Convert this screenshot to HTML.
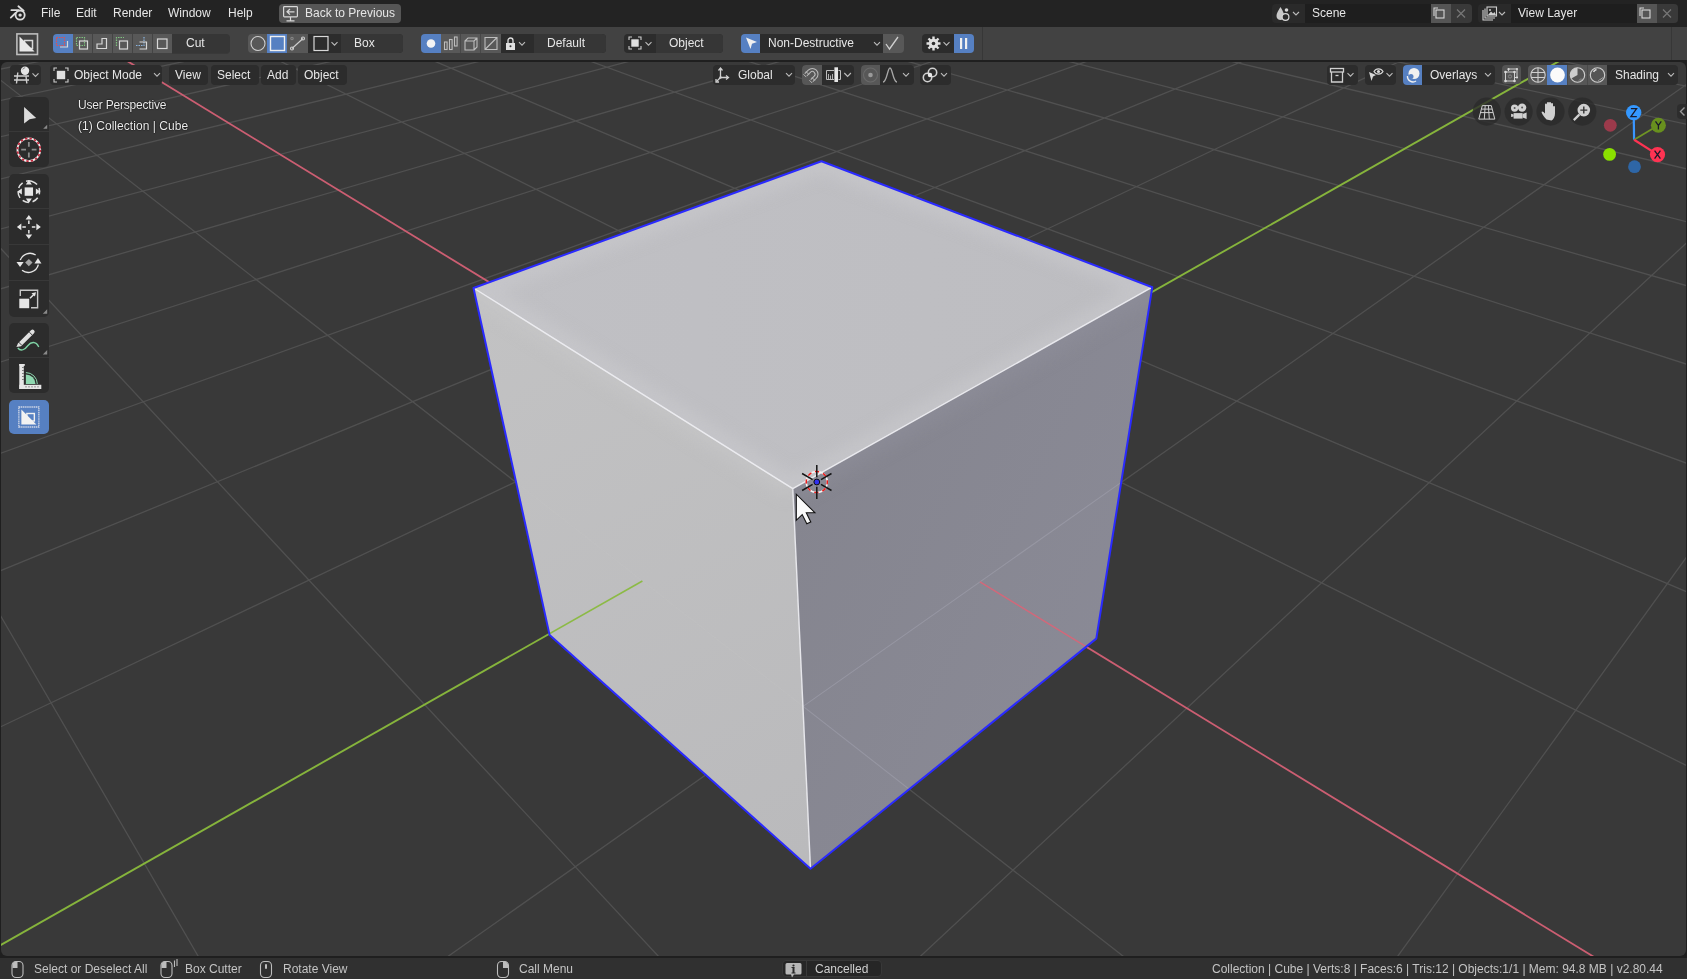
<!DOCTYPE html>
<html><head><meta charset="utf-8">
<style>
html,body{margin:0;padding:0;width:1687px;height:979px;overflow:hidden;background:#1f1f1f;}
*{box-sizing:border-box;}
body{font-family:"Liberation Sans",sans-serif;font-size:12px;color:#e6e6e6;position:relative;}
.a{position:absolute;}
.t{position:absolute;white-space:pre;line-height:14px;will-change:transform;}
#topbar{left:0;top:0;width:1687px;height:27px;background:#232323;}
#tool{left:0;top:27px;width:1687px;height:33px;background:#424242;}
#status{left:0;top:958px;width:1687px;height:21px;background:#303030;}
.btn{position:absolute;height:20px;border-radius:4px;}
.blue{background:#5680c2;}
.gray{background:#585858;}
.dark{background:#2c2c2c;}
.hb{position:absolute;height:20px;background:#2c2c2c;border-radius:4px;}
.tb{position:absolute;left:9px;width:40px;background:#2c2c2c;border-radius:5px;}
svg.ic{position:absolute;overflow:visible;}
</style></head><body>
<svg width="1687" height="979" viewBox="0 0 1687 979" style="position:absolute;left:0;top:0">
<defs><clipPath id="vp"><rect x="1" y="62" width="1685" height="894" rx="6" ry="6"/></clipPath>
<linearGradient id="gTop" x1="473" y1="289" x2="1152" y2="287" gradientUnits="userSpaceOnUse"><stop offset="0" stop-color="#c0c0c4"/><stop offset="1" stop-color="#bdbdc1"/></linearGradient>
<linearGradient id="gLeft" x1="500" y1="300" x2="800" y2="860" gradientUnits="userSpaceOnUse"><stop offset="0" stop-color="#c2c2c3"/><stop offset="1" stop-color="#bababc"/></linearGradient>
<linearGradient id="gRight" x1="800" y1="480" x2="1150" y2="640" gradientUnits="userSpaceOnUse"><stop offset="0" stop-color="#85858f"/><stop offset="1" stop-color="#8a8a96"/></linearGradient>
</defs>
<g clip-path="url(#vp)">
<rect x="0" y="0" width="1687" height="979" fill="#393939"/>
<path d="M46.1,60.0L0.0,69.2 M190.9,60.0L0.0,100.6 M337.1,60.0L0.0,136.9 M484.8,60.0L0.0,179.2 M634.0,60.0L0.0,229.1 M784.6,60.0L0.0,289.0 M936.8,60.0L0.0,362.2 M1090.5,60.0L0.0,453.5 M0.0,614.8L199.2,958.0 M1245.8,60.0L0.0,570.9 M0.0,247.7L660.0,958.0 M1402.6,60.0L0.0,727.1 M0.0,79.7L1125.5,958.0 M1687.0,84.1L445.7,958.0 M277.8,60.0L1687.0,765.8 M1687.0,242.5L918.6,958.0 M431.7,60.0L1687.0,591.9 M1687.0,556.6L1396.4,958.0 M587.1,60.0L1687.0,463.3 M744.2,60.0L1687.0,364.3 M903.0,60.0L1687.0,285.8 M1063.4,60.0L1687.0,221.9 M1225.6,60.0L1687.0,169.0 M1389.5,60.0L1687.0,124.4 M1555.1,60.0L1687.0,86.3" stroke="#505050" stroke-width="1.3" fill="none"/>
<path d="M125.5,60.0L1595.7,958.0" stroke="#cc5e72" stroke-width="1.8" fill="none"/>
<path d="M1561.1,60.0L0.0,945.4" stroke="#86b43c" stroke-width="1.9" fill="none"/>
<polygon points="821.4,161.2 1152.3,287.2 792.8,488.7 473.5,288.0" fill="url(#gTop)"/>
<polygon points="473.5,288.0 792.8,488.7 810.5,868.7 549.6,635.1" fill="url(#gLeft)"/>
<polygon points="792.8,488.7 1152.3,287.2 1096.3,638.6 810.5,868.7" fill="url(#gRight)"/>
<filter id="blur6" x="-20%" y="-20%" width="140%" height="140%"><feGaussianBlur stdDeviation="8"/></filter>
<clipPath id="cTop"><polygon points="821.4,161.2 1152.3,287.2 792.8,488.7 473.5,288.0"/></clipPath>
<clipPath id="cLeft"><polygon points="473.5,288.0 792.8,488.7 810.5,868.7 549.6,635.1"/></clipPath>
<clipPath id="cRight"><polygon points="792.8,488.7 1152.3,287.2 1096.3,638.6 810.5,868.7"/></clipPath>
<g clip-path="url(#cTop)"><polygon points="821.4,161.2 1152.3,287.2 792.8,488.7 473.5,288.0" fill="none" stroke="#cbcbcf" stroke-width="22" filter="url(#blur6)" opacity="0.55"/></g>
<g clip-path="url(#cLeft)"><path d="M473.5,288.0L792.8,488.7" fill="none" stroke="#c9c9ca" stroke-width="20" filter="url(#blur6)" opacity="0.5"/></g>
<g clip-path="url(#cRight)"><path d="M792.8,488.7L1152.3,287.2" fill="none" stroke="#92929e" stroke-width="20" filter="url(#blur6)" opacity="0.5"/></g>
<clipPath id="sil"><polygon points="821.4,161.2 1152.3,287.2 1096.3,638.6 810.5,868.7 549.6,635.1 473.5,288.0"/></clipPath>
<g clip-path="url(#sil)">
<path d="M803.1,706.4L1121.2,482.4" stroke="#9a9aa6" stroke-width="1.1" fill="none" opacity="0.8"/>
<path d="M515.5,481.9L803.1,706.4" stroke="#c8c8ca" stroke-width="1.1" fill="none" opacity="0.2"/>
<path d="M803.1,706.4L1298.6,1093.1" stroke="#9a9aa6" stroke-width="1.1" fill="none" opacity="0.8"/>
<path d="M980.0,581.9L1457.5,873.6" stroke="#d2687a" stroke-width="1.5" fill="none"/>
<path d="M642.4,581.0L144.4,863.5" stroke="#8cba45" stroke-width="1.6" fill="none"/>
</g>
<path d="M473.5,288.0L792.8,488.7L1152.3,287.2 M792.8,488.7L810.5,868.7" stroke="#f2f2f6" stroke-width="1.4" fill="none" opacity="0.9"/>
<polygon points="821.4,161.2 1152.3,287.2 1096.3,638.6 810.5,868.7 549.6,635.1 473.5,288.0" fill="none" stroke="#2a2aff" stroke-width="2.0" stroke-linejoin="round"/>
</g>
</svg>
<div id="vhead" class="a" style="left:0;top:0">
<div class="hb" style="left:10px;top:65px;width:31px"></div>
<svg class="ic" style="left:0;top:60px" width="45" height="30" viewBox="0 60 45 30">
<g stroke="#cfcfcf" stroke-width="1.4" fill="none"><path d="M14 76 H29 M14 80 H29 M17.8 72.5 L16.5 83.5 M26 76 L26.8 83.5"/></g>
<circle cx="25" cy="70.8" r="4.2" fill="#e6e6e6"/><path d="M22.8 69.5 A2.4 2.4 0 0 1 25.2 67.8" stroke="#777" stroke-width="0.9" fill="none"/>
<path d="M32.5 73.3 L35.5 76.3 L38.5 73.3" stroke="#bbb" stroke-width="1.2" fill="none"/>
</svg>
<div class="hb" style="left:50px;top:65px;width:112px"></div>
<svg class="ic" style="left:50px;top:65px" width="112" height="20" viewBox="0 0 112 20">
<g fill="none" stroke="#cfcfcf" stroke-width="1.1"><path d="M4 6 V3 H7 M15 3 H18 V6 M18 14 V17 H15 M7 17 H4 V14"/></g>
<rect x="6.8" y="5.8" width="8.4" height="8.4" fill="#e0e0e0"/>
<path d="M104 8.2 L107 11.2 L110 8.2" stroke="#bbb" stroke-width="1.1" fill="none"/>
</svg>
<span class="t" style="left:74px;top:68px">Object Mode</span>
<div class="hb" style="left:169px;top:65px;width:39px"></div><span class="t" style="left:175px;top:68px">View</span>
<div class="hb" style="left:211px;top:65px;width:48px"></div><span class="t" style="left:217px;top:68px">Select</span>
<div class="hb" style="left:261px;top:65px;width:35px"></div><span class="t" style="left:267px;top:68px">Add</span>
<div class="hb" style="left:298px;top:65px;width:49px"></div><span class="t" style="left:304px;top:68px">Object</span>

<div class="hb" style="left:713px;top:65px;width:82px"></div>
<svg class="ic" style="left:713px;top:65px" width="82" height="20" viewBox="0 0 82 20">
<g stroke="#d0d0d0" stroke-width="1.3" fill="none"><path d="M7.5 3.5 V12.5 L15 12.5 M7.5 12.5 L3.5 16.5"/><path d="M5.5 5.5 L7.5 3 L9.5 5.5 M13 10.5 L15.5 12.5 L13 14.5 M3 14 V17 H6"/></g>
<circle cx="7.5" cy="12.5" r="1.2" fill="#d0d0d0"/>
<path d="M73 8.2 L76 11.2 L79 8.2" stroke="#bbb" stroke-width="1.1" fill="none"/>
</svg>
<span class="t" style="left:738px;top:68px">Global</span>
<div class="hb" style="left:802px;top:65px;width:52px"></div>
<div class="a" style="left:802px;top:65px;width:20px;height:20px;background:#575757;border-radius:4px 0 0 4px"></div>
<svg class="ic" style="left:795px;top:60px" width="65" height="30" viewBox="795 60 65 30">
<g transform="translate(812.3 74.2) rotate(45)">
<path d="M-4.2 5 V0 A4.2 4.2 0 0 1 4.2 0 V5" stroke="#bdbdbd" stroke-width="4" fill="none"/>
<path d="M-4.2 5.6 V0 A4.2 4.2 0 0 1 4.2 0 V5.6" stroke="#585858" stroke-width="2" fill="none"/>
<path d="M-6.2 2.6 H-2.2 M2.2 2.6 H6.2" stroke="#bdbdbd" stroke-width="0.9"/>
<path d="M-6.2 6.3 H-2.2 M2.2 6.3 H6.2" stroke="#bdbdbd" stroke-width="0.9"/>
</g>
<path d="M834 70.5 H826.5 V79.5 H834 M838.5 70.5 H840.5 V79.5 H838.5" stroke="#bdbdbd" stroke-width="1" fill="none"/>
<path d="M828.5 79 V74 M830.5 79 V75.5 M832.5 79 V74" stroke="#bdbdbd" stroke-width="0.9"/>
<rect x="834.4" y="67.3" width="3.6" height="14.7" fill="#e6e6e6"/>
<path d="M844.3 73 L847.6 76.3 L850.9 73" stroke="#bbb" stroke-width="1.2" fill="none"/>
</svg>
<div class="hb" style="left:861px;top:65px;width:53px"></div>
<div class="a" style="left:861px;top:65px;width:19px;height:20px;background:#575757;border-radius:4px 0 0 4px"></div>
<svg class="ic" style="left:861px;top:65px" width="53" height="20" viewBox="0 0 53 20">
<circle cx="9.5" cy="10" r="7" fill="none" stroke="#6a6a6a" stroke-width="1.1"/><circle cx="9.5" cy="10" r="2.3" fill="#9a9a9a"/>
<path d="M22 17 C26 17 26.5 3 29 3 C31.5 3 32 17 36 17" stroke="#a8a8a8" stroke-width="1.3" fill="none"/>
<path d="M42 8.2 L45 11.2 L48 8.2" stroke="#bbb" stroke-width="1.1" fill="none"/>
</svg>
<div class="hb" style="left:920px;top:65px;width:31px"></div>
<svg class="ic" style="left:920px;top:65px" width="31" height="20" viewBox="0 0 31 20">
<g stroke="#d0d0d0" stroke-width="1.6" fill="none"><circle cx="7.5" cy="12.5" r="4.2"/><circle cx="12.5" cy="7.5" r="4.2"/></g><circle cx="10" cy="10" r="2.2" fill="#e8e8e8"/>
<path d="M21 8.2 L24 11.2 L27 8.2" stroke="#bbb" stroke-width="1.1" fill="none"/>
</svg>

<div class="hb" style="left:1327px;top:65px;width:31px"></div>
<svg class="ic" style="left:1327px;top:65px" width="31" height="20" viewBox="0 0 31 20">
<g stroke="#d0d0d0" stroke-width="1.3" fill="none"><rect x="3.5" y="3.5" width="13" height="3.5"/><path d="M4.5 7 V17 H15.5 V7"/><path d="M8.5 10.5 H11.5"/></g>
<path d="M20.5 8.2 L23.5 11.2 L26.5 8.2" stroke="#bbb" stroke-width="1.1" fill="none"/>
</svg>
<div class="hb" style="left:1365px;top:65px;width:31px"></div>
<svg class="ic" style="left:1365px;top:65px" width="31" height="20" viewBox="0 0 31 20">
<path d="M4 7 L11 10 L8 11.5 L6.5 16 Z" fill="#d8d8d8"/>
<path d="M9 6.5 C11 3 16 3 18 6.5 C16 10 11 10 9 6.5Z" fill="none" stroke="#d8d8d8" stroke-width="1.2"/><circle cx="13.5" cy="6.5" r="1.6" fill="#d8d8d8"/>
<path d="M21.5 8.2 L24.5 11.2 L27.5 8.2" stroke="#bbb" stroke-width="1.1" fill="none"/>
</svg>
<div class="hb" style="left:1403px;top:65px;width:92px"></div>
<div class="a" style="left:1403px;top:65px;width:19px;height:20px;background:#5680c2;border-radius:4px 0 0 4px"></div>
<svg class="ic" style="left:1403px;top:65px" width="92" height="20" viewBox="0 0 92 20">
<circle cx="11" cy="8.5" r="5.5" fill="#f0f0f0"/><path d="M4.5 11 A5.5 5.5 0 0 0 13 16" stroke="#f0f0f0" stroke-width="1.4" fill="none"/><circle cx="8" cy="11.5" r="2.5" fill="#5680c2"/>
<path d="M82 8.2 L85 11.2 L88 8.2" stroke="#bbb" stroke-width="1.1" fill="none"/>
</svg>
<span class="t" style="left:1430px;top:68px">Overlays</span>
<div class="a" style="left:1502px;top:65px;width:19px;height:19px;background:#545454;border-radius:4px"></div>
<svg class="ic" style="left:1502px;top:65px" width="19" height="20" viewBox="0 0 19 20">
<g stroke="#d0d0d0" stroke-width="1" fill="none"><path d="M6.5 6 V4 H15 V12.5 H13"/><rect x="3.5" y="7" width="9" height="9"/><circle cx="8" cy="11.5" r="1.6" stroke="#888"/></g>
<g fill="#d8d8d8"><circle cx="3.5" cy="7" r="1.3"/><circle cx="12.5" cy="7" r="1.3"/><circle cx="3.5" cy="16" r="1.3"/><circle cx="12.5" cy="16" r="1.3"/><circle cx="6.5" cy="4.2" r="1.1"/><circle cx="15" cy="4" r="1.1"/><circle cx="15" cy="12.5" r="1.1"/></g>
</svg>
<div class="hb" style="left:1528px;top:65px;width:150px"></div>
<div class="a" style="left:1528px;top:65px;width:79px;height:20px;background:#575757;border-radius:4px 0 0 4px"></div>
<div class="a" style="left:1547px;top:65px;width:20px;height:20px;background:#5680c2"></div>
<div class="a" style="left:1567px;top:65px;width:1px;height:20px;background:#4a4a4a"></div>
<div class="a" style="left:1587px;top:65px;width:1px;height:20px;background:#4a4a4a"></div>
<svg class="ic" style="left:1528px;top:65px" width="150" height="20" viewBox="0 0 150 20">
<g stroke="#cfcfcf" stroke-width="1.1" fill="none"><circle cx="10" cy="10" r="7.2"/><path d="M10 2.8 V17.2 M3 7.5 H17 M3 12.5 H17"/></g>
<circle cx="29.5" cy="10" r="7.4" fill="#fafafa"/>
<circle cx="49.5" cy="10" r="7.2" fill="#555" stroke="#d0d0d0" stroke-width="1.1"/><path d="M49.5 10 V2.8 A7.2 7.2 0 0 0 43.3 13.6 Z" fill="#cdcdcd"/><path d="M51 15.5 L53 13.5 M52.5 16 L54.5 14 M54 15 L55.5 13.2" stroke="#aaa" stroke-width="0.7"/>
<circle cx="69.5" cy="10" r="7.2" fill="#555" stroke="#d0d0d0" stroke-width="1.1"/><path d="M65.5 6.8 A5 5 0 0 1 68.5 4.6" stroke="#d8d8d8" stroke-width="1.6" fill="none"/><path d="M72 15 L74 13 M70 16 L72.5 13.8 M73.8 13.8 L75.2 12" stroke="#aaa" stroke-width="0.7"/>
<path d="M140 8.2 L143 11.2 L146 8.2" stroke="#bbb" stroke-width="1.1" fill="none"/>
</svg>
<span class="t" style="left:1615px;top:68px">Shading</span>
</div>

<div id="gizmo" class="a" style="left:0;top:0">
<svg class="ic" style="left:1460px;top:90px" width="227" height="90" viewBox="1460 90 227 90">
<g fill="#2a2a2a" fill-opacity="0.78"><circle cx="1486.8" cy="111.6" r="14.1"/><circle cx="1518.6" cy="111.6" r="14.1"/><circle cx="1550.5" cy="111.6" r="14.1"/><circle cx="1582.3" cy="111.6" r="14.1"/></g>
<g transform="translate(1486.8 111.6)" stroke="#cfcfcf" stroke-width="1" fill="none"><path d="M-4.5 -6 H4.5 L8 7.5 H-8 Z M-6.2 1 H6.2 M-5.3 -2.5 H5.3 M-1.6 -6 L-2.5 7.5 M1.6 -6 L2.5 7.5"/></g>
<g transform="translate(1518.6 111.6)" fill="#d0d0d0"><circle cx="-4" cy="-3.5" r="3.6"/><circle cx="3.5" cy="-4" r="4.2"/><rect x="-5" y="1.5" width="9" height="5.5"/><path d="M4 2.5 L8 0.8 V7.5 L4 5.8Z M-5 3 L-7.5 2.2 V5.5 L-5 4.8Z"/><circle cx="-4" cy="-3.5" r="1" fill="#555"/><circle cx="3.5" cy="-4" r="1" fill="#555"/></g>
<g transform="translate(1550.5 111.6)" fill="#d0d0d0"><path d="M-4 8 C-7 5 -8.5 2 -9 0.5 C-8.5 -0.5 -7 0 -5.5 2 V-7 A1 1 0 0 1 -3.5 -7 V-1 V-8.5 A1 1 0 0 1 -1.5 -8.5 V-1 V-8.5 A1 1 0 0 1 0.5 -8.5 V-1 V-7.5 A1 1 0 0 1 2.5 -7.5 V-0.5 V-4.5 A1 1 0 0 1 4.5 -4.5 V2 C4.5 5 3 8 1 9 Z"/></g>
<g transform="translate(1582.3 111.6)"><circle cx="1.5" cy="-1.5" r="6.3" fill="#d0d0d0"/><path d="M-3 3 L-8.5 8.5" stroke="#d0d0d0" stroke-width="2.2"/><path d="M1.5 -5 V2 M-2 -1.5 H5" stroke="#333" stroke-width="1.4"/></g>
<path d="M1634.1 139.8 L1633.7 112.6" stroke="#3a96ff" stroke-width="2.2"/>
<path d="M1634.1 139.8 L1658.4 125.3" stroke="#6f9424" stroke-width="1.8"/>
<path d="M1634.1 139.8 L1657.5 154.6" stroke="#ff3352" stroke-width="2.2"/>
<circle cx="1610.3" cy="125.3" r="6.4" fill="#9c3a4b"/>
<circle cx="1609.6" cy="154.4" r="6.4" fill="#8ae000"/>
<circle cx="1634.5" cy="166.7" r="6.4" fill="#2e66a6"/>
<circle cx="1633.7" cy="112.6" r="7.7" fill="#3498ff"/>
<circle cx="1658.4" cy="125.3" r="7.5" fill="#68901e"/>
<circle cx="1657.5" cy="154.6" r="7.6" fill="#ff3352"/>
<g fill="none" stroke="#1a1a2a" stroke-width="1.3"><path d="M1630.9 108.6 H1636.6 L1630.9 116.6 H1636.8"/><path d="M1655.5 121.4 L1658.4 125.3 L1661.3 121.4 M1658.4 125.3 V129.4"/><path d="M1654.6 150.6 L1660.4 158.6 M1660.4 150.6 L1654.6 158.6"/></g>
<rect x="1677" y="104" width="14" height="15" rx="4" fill="#2a2a2a" fill-opacity="0.8"/>
<path d="M1684.5 107.5 L1680.5 111.5 L1684.5 115.5" stroke="#9a9a9a" stroke-width="1.4" fill="none"/>
</svg>
<svg class="ic" style="left:790px;top:460px" width="50" height="70" viewBox="790 460 50 70">
<circle cx="816.8" cy="482.0" r="10.6" fill="none" stroke="#f6f6f6" stroke-width="1.5"/>
<circle cx="816.8" cy="482.0" r="10.6" fill="none" stroke="#ee1a1a" stroke-width="1.5" stroke-dasharray="4.16 4.16" transform="rotate(-100 816.8 482.0)"/>
<path d="M816.8 477.2 L816.8 465.0 M816.8 486.8 L816.8 499.0 M821.0 479.6 L831.5 473.5 M812.6 479.6 L802.1 473.5 M812.6 484.4 L802.1 490.5 M821.0 484.4 L831.5 490.5" stroke="#151515" stroke-width="1.5"/>
<circle cx="816.8" cy="482.0" r="2.9" fill="#3030f0" stroke="#101010" stroke-width="1"/>
<path d="M796.3 494.2 V520.3 L802.2 514.6 L806.8 523.8 L810.8 521.9 L806.3 512.7 L814.9 512.7 Z" fill="#fafafa" stroke="#111" stroke-width="1.1" stroke-linejoin="miter"/>
</svg>
</div>
<div id="vtools" class="a" style="left:0;top:0">
<div class="tb" style="top:97px;height:70px"></div>
<div class="a" style="left:9px;top:131px;width:40px;height:1px;background:#383838"></div>
<div class="tb" style="top:174px;height:143px"></div>
<div class="tb" style="top:323px;height:70px"></div>
<div class="tb" style="top:400px;height:34px;background:#5680c2"></div>
<svg class="ic" style="left:0;top:90px" width="60" height="350" viewBox="0 90 60 350">
<path d="M24.1 107 L36.2 118 L29.6 119.2 L24.1 123.6 Z" fill="#dcdcdc"/><path d="M47.2 124.7 V128.7 H43.2 Z" fill="#8a8a8a"/>
<circle cx="28.85" cy="149.7" r="11.4" fill="none" stroke="#f2f2f2" stroke-width="1.8"/><circle cx="28.85" cy="149.7" r="11.4" fill="none" stroke="#c0283c" stroke-width="1.8" stroke-dasharray="2.4 2.1"/>
<path d="M28.85 142 V146.8 M28.85 152.6 V157.4 M21.2 149.7 H26 M31.7 149.7 H36.5" stroke="#8c8c8c" stroke-width="1.8"/>
<g transform="translate(28.85 191.6)"><circle r="10.8" fill="none" stroke="#e0e0e0" stroke-width="1.5" stroke-dasharray="6.5 3.8" transform="rotate(-75)"/><rect x="-4.2" y="-4.2" width="8.4" height="8.4" fill="#e6e6e6"/><path d="M0 -11.5 L-3 -7 H3Z M0 11.5 L-3 7 H3Z M-11.5 0 L-7 -3 V3Z M11.5 0 L7 -3 V3Z" fill="#e6e6e6"/></g>
<g transform="translate(28.85 226.9)" fill="#e6e6e6"><path d="M0 -12 L-3.3 -7.5 H3.3Z M0 12 L-3.3 7.5 H3.3Z M-12 0 L-7.5 -3.3 V3.3Z M12 0 L7.5 -3.3 V3.3Z"/><path d="M0 -6.5 V-3 M0 3 V6.5 M-6.5 0 H-3 M3 0 H6.5" stroke="#e6e6e6" stroke-width="1.5"/></g>
<g transform="translate(28.85 262.6)"><path d="M-8.6 -2.5 A10.3 10.3 0 0 1 6.8 -7.6" stroke="#e6e6e6" stroke-width="1.4" fill="none"/><path d="M-6.8 7.6 A10.3 10.3 0 0 0 9.5 2" stroke="#e6e6e6" stroke-width="1.4" fill="none"/><path d="M-3.7 0 L0 -3.7 L3.7 0 L0 3.7Z" fill="#a6a6a6"/><path d="M-12.4 -0.6 H-5.2 L-8.8 4.5Z M12.6 0.8 H5.6 L9.1 -4.5Z" fill="#e6e6e6"/></g>
<g><path d="M20.3 296 V290.3 H37.6 V307.8 H31" stroke="#c8c8c8" stroke-width="1.4" fill="none"/><rect x="19.3" y="298.7" width="9.9" height="9.5" fill="#e6e6e6"/><path d="M30 298.3 L34.6 293.7" stroke="#e6e6e6" stroke-width="1.5"/><path d="M36 292.2 L31.5 293.2 L34.9 296.6Z" fill="#e6e6e6"/><path d="M47.2 309.3 V313.8 H42.8 Z" fill="#8a8a8a"/></g>
<g><path d="M16.4 347 L18 343.2 L31 330.2 A2 2 0 0 1 34 333.2 L21 346.2 Z" fill="#e0e0e0"/><path d="M18 341.5 L21.8 345.3 M29.2 332 L32.6 335.4" stroke="#2c2c2c" stroke-width="0.9"/><path d="M17.8 348 C21 352 25 349.5 28 345.5 C31 341.5 36 341 38.8 347" stroke="#7fd3a5" stroke-width="1.3" fill="none"/><path d="M47.2 350 V354.5 H42.8 Z" fill="#8a8a8a"/></g>
<g><path d="M25.9 384 V374.4 A9.6 9.6 0 0 1 35.5 384 Z" fill="#8fd8b0"/><path d="M25.9 372.6 A11.4 11.4 0 0 1 37.3 384" stroke="#8fd8b0" stroke-width="1" fill="none"/><rect x="19.3" y="364" width="4.5" height="25" fill="#e6e6e6"/><rect x="19.3" y="384.8" width="22" height="4.2" fill="#e6e6e6"/><rect x="19.3" y="364" width="5.5" height="1.8" fill="#e6e6e6"/><path d="M22 367.5 H23.8 M22 370.5 H23.8 M22 373.5 H23.8 M22 376.5 H23.8 M22 379.5 H23.8 M26 386 V387.5 M29 386 V387.5 M32 386 V387.5 M35 386 V387.5 M38 386 V387.5" stroke="#555" stroke-width="0.7"/></g>
<g transform="translate(28.85 417)"><rect x="-10" y="-10" width="20" height="20" fill="none" stroke="#d0d6e6" stroke-width="1.3" stroke-dasharray="1.3 0.6"/><rect x="-2" y="-3.5" width="7.5" height="7.5" fill="none" stroke="#f0f0f0" stroke-width="1.4"/><path d="M-7.5 -7.5 L7.5 7.5 H-7.5Z" fill="#f2f2f2"/></g>
</svg>
<div class="a" style="left:9px;top:208px;width:40px;height:1px;background:#383838"></div>
<div class="a" style="left:9px;top:244px;width:40px;height:1px;background:#383838"></div>
<div class="a" style="left:9px;top:280px;width:40px;height:1px;background:#383838"></div>
<div class="a" style="left:9px;top:357px;width:40px;height:1px;background:#383838"></div>
<span class="t" style="left:78px;top:98px;color:#ececec;text-shadow:0 0 1.5px #000,0 0 1px #000;letter-spacing:-0.2px">User Perspective</span>
<span class="t" style="left:78px;top:119px;color:#ececec;text-shadow:0 0 1.5px #000,0 0 1px #000;letter-spacing:0.05px">(1) Collection | Cube</span>
</div>

<div id="topbar" class="a">
<svg class="ic" style="left:0;top:0" width="40" height="27" viewBox="0 0 40 27">
<g stroke="#dcdcdc" stroke-width="1.8" fill="none" stroke-linecap="round">
<circle cx="20.1" cy="15.1" r="4.6"/>
<path d="M11.4 10.2 L18.6 10.2"/><path d="M10.8 17.6 L15.6 13"/><path d="M18.4 6.3 L23.6 10.8"/>
</g><circle cx="20.1" cy="15.1" r="1.7" fill="#dcdcdc"/>
</svg>
<span class="t" style="left:41px;top:6px">File</span>
<span class="t" style="left:76px;top:6px">Edit</span>
<span class="t" style="left:113px;top:6px">Render</span>
<span class="t" style="left:168px;top:6px">Window</span>
<span class="t" style="left:228px;top:6px">Help</span>
<div class="a" style="left:279px;top:4px;width:122px;height:19px;background:#565656;border-radius:4px"></div>
<svg class="ic" style="left:282px;top:5px" width="18" height="18" viewBox="0 0 18 18">
<g stroke="#d8d8d8" stroke-width="1.2" fill="none"><rect x="1.6" y="1.6" width="13.8" height="10.3" rx="0.8"/><path d="M8.5 12 V15.5 M4.5 15.8 H12.5"/><path d="M12.5 6.8 H5 M8 4 L5 6.8 L8 9.6"/></g>
</svg>
<span class="t" style="left:305px;top:6px">Back to Previous</span>
<div class="a" style="left:1272px;top:4px;width:200px;height:19px;background:#2a2a2a;border-radius:4px"></div>
<div class="a" style="left:1305px;top:4px;width:126px;height:19px;background:#1e1e1e"></div>
<div class="a" style="left:1431px;top:4px;width:20px;height:19px;background:#555"></div>
<div class="a" style="left:1451px;top:4px;width:21px;height:19px;background:#393939;border-radius:0 4px 4px 0"></div>
<svg class="ic" style="left:1272px;top:4px" width="200" height="19" viewBox="0 0 200 19">
<path d="M8.5 3 C6 7 4.5 9.5 4.5 12 C4.5 14.5 6.5 16 8.5 16 C10.5 16 12 14.5 12 12 C12 9.5 11 7 8.5 3Z" fill="#c8c8c8"/>
<circle cx="14.5" cy="6" r="1.8" fill="#d8d8d8"/><circle cx="13.5" cy="13" r="3.4" fill="#2a2a2a" stroke="#d8d8d8" stroke-width="1.2"/>
<path d="M21 8 L24 11 L27 8" stroke="#bbb" stroke-width="1.1" fill="none"/>
<g fill="none" stroke="#d8d8d8" stroke-width="1.1"><rect x="164" y="6" width="8" height="8"/><path d="M166 4 H162 V12"/></g>
<path d="M185 5.5 L193 13.5 M193 5.5 L185 13.5" stroke="#777" stroke-width="1.2"/>
</svg>
<span class="t" style="left:1312px;top:6px">Scene</span>
<div class="a" style="left:1478px;top:4px;width:200px;height:19px;background:#2a2a2a;border-radius:4px"></div>
<div class="a" style="left:1511px;top:4px;width:126px;height:19px;background:#1e1e1e"></div>
<div class="a" style="left:1637px;top:4px;width:20px;height:19px;background:#555"></div>
<div class="a" style="left:1657px;top:4px;width:21px;height:19px;background:#393939;border-radius:0 4px 4px 0"></div>
<svg class="ic" style="left:1478px;top:4px" width="200" height="19" viewBox="0 0 200 19">
<g fill="none" stroke="#d0d0d0" stroke-width="1.1"><path d="M5 6 V16 H15"/><path d="M7 4.5 V14 H17"/><rect x="9" y="3" width="9.5" height="9"/></g>
<path d="M10 11 L13 7.5 L15 9.5 L16.5 8 L18 11Z" fill="#d0d0d0"/><circle cx="12" cy="6" r="1" fill="#d0d0d0"/>
<path d="M21 8 L24 11 L27 8" stroke="#bbb" stroke-width="1.1" fill="none"/>
<g fill="none" stroke="#d8d8d8" stroke-width="1.1"><rect x="164" y="6" width="8" height="8"/><path d="M166 4 H162 V12"/></g>
<path d="M185 5.5 L193 13.5 M193 5.5 L185 13.5" stroke="#777" stroke-width="1.2"/>
</svg>
<span class="t" style="left:1518px;top:6px">View Layer</span>
</div>
<div id="tool" class="a">
<svg class="ic" style="left:16px;top:6px" width="23" height="23" viewBox="0 0 23 23">
<rect x="0.9" y="0.9" width="20.6" height="20.6" fill="none" stroke="#bdbdbd" stroke-width="1.6"/>
<rect x="8.5" y="7.5" width="8" height="8" fill="none" stroke="#d9d9d9" stroke-width="1.5"/>
<path d="M3.5 3.5 L18.6 18.6 L3.5 18.6 Z" fill="#e8e8e8"/>
</svg>
<div class="btn blue" style="left:53px;top:7px;width:20px;height:19px;border-radius:4px 0 0 4px"></div>
<div class="btn gray" style="left:73px;top:7px;width:99px;height:19px;border-radius:0"></div>
<div class="a" style="left:92px;top:7px;width:1px;height:19px;background:#444"></div>
<div class="a" style="left:112px;top:7px;width:1px;height:19px;background:#444"></div>
<div class="a" style="left:132px;top:7px;width:1px;height:19px;background:#444"></div>
<div class="a" style="left:152px;top:7px;width:1px;height:19px;background:#444"></div>
<div class="btn" style="left:172px;top:7px;width:58px;height:19px;border-radius:0 4px 4px 0;background:#363636;box-shadow:0 1px 0 #393939"></div>
<svg class="ic" style="left:53px;top:7px" width="120" height="19" viewBox="0 0 120 19">
<g fill="none" stroke-width="1.2">
<rect x="3.5" y="3.5" width="8" height="8" stroke="#e05050" stroke-dasharray="1.5 1"/><path d="M7 13 H14.5 V7" stroke="#d8d8d8"/>
<rect x="23.5" y="3.5" width="8" height="8" stroke="#7fc27f" stroke-dasharray="1.5 1"/><rect x="26.5" y="7" width="8" height="8" stroke="#d8d8d8"/>
<path d="M44 14.5 H53.5 V4.5 H49 V10 H44 Z" stroke="#d8d8d8"/>
<path d="M63.5 12 V3.5 H71" stroke="#7fc27f" stroke-dasharray="1.5 1"/><rect x="66.5" y="7" width="8" height="8" stroke="#d8d8d8"/>
<path d="M83 11.5 H91 V3" stroke="#89b4e0" stroke-dasharray="1.5 1"/><path d="M86.5 8 H93.5 V15 H86.5" stroke="#d8d8d8"/>
<rect x="104.5" y="5" width="9.5" height="9.5" stroke="#d8d8d8"/>
</g></svg>
<span class="t" style="left:186px;top:9px">Cut</span>

<div class="btn gray" style="left:248px;top:7px;width:60px;height:19px;border-radius:4px 0 0 4px"></div>
<div class="btn blue" style="left:267px;top:7px;width:20px;height:19px;border-radius:0"></div>
<div class="btn dark" style="left:308px;top:7px;width:95px;height:19px;border-radius:0 4px 4px 0"></div>
<div class="btn" style="left:341px;top:7px;width:62px;height:19px;border-radius:0 4px 4px 0;background:#363636"></div>
<svg class="ic" style="left:248px;top:7px" width="100" height="19" viewBox="0 0 100 19">
<g fill="none" stroke="#cfcfcf" stroke-width="1.1">
<circle cx="10" cy="9.5" r="7"/>
<rect x="22.5" y="2.5" width="14" height="14" stroke="#f0f0f0" stroke-width="1.4" fill="#5680c2"/>
<path d="M44 14.5 L55 4.5"/><circle cx="44" cy="14.5" r="1.5"/><circle cx="55" cy="4.5" r="1.5"/><circle cx="44" cy="4.5" r="1.2" stroke="#888"/>
<rect x="66" y="2.5" width="14" height="14" stroke="#d8d8d8" stroke-width="1.2"/>
<path d="M83.5 8.2 L86.5 11.2 L89.5 8.2" stroke="#bbb" stroke-width="1.1"/>
</g></svg>
<span class="t" style="left:354px;top:9px">Box</span>

<div class="btn blue" style="left:421px;top:7px;width:20px;height:19px;border-radius:4px 0 0 4px"></div>
<div class="btn gray" style="left:441px;top:7px;width:60px;height:19px;border-radius:0"></div>
<div class="a" style="left:460px;top:7px;width:1px;height:19px;background:#484848"></div>
<div class="a" style="left:480px;top:7px;width:1px;height:19px;background:#484848"></div>
<div class="btn dark" style="left:501px;top:7px;width:105px;height:19px;border-radius:0 4px 4px 0"></div>
<div class="btn" style="left:534px;top:7px;width:72px;height:19px;border-radius:0 4px 4px 0;background:#363636"></div>
<svg class="ic" style="left:421px;top:7px" width="120" height="19" viewBox="0 0 120 19">
<circle cx="10" cy="9.5" r="4.3" fill="#f4f4f4"/>
<g fill="none" stroke="#bdbdbd" stroke-width="1.1">
<rect x="23.5" y="8" width="2.6" height="7.5"/><rect x="28.5" y="5.5" width="2.6" height="10"/><rect x="33.5" y="3" width="2.6" height="9"/>
<path d="M44 7 H53 V16 H44 Z M44 7 L47 4 H56 V13 L53 16 M53 7 L56 4"/>
<path d="M64 3.5 H76 V15.5 H64 Z M64 15.5 L76 3.5"/>
</g>
<path d="M85 9 H94 V16 H85 Z" fill="#e0e0e0"/><path d="M87 9 V6.5 A2.5 2.5 0 0 1 92 6.5 V9" stroke="#e0e0e0" stroke-width="1.3" fill="none"/><circle cx="89.5" cy="12.3" r="1" fill="#333"/>
<path d="M98 8.2 L101 11.2 L104 8.2" stroke="#bbb" stroke-width="1.1" fill="none"/>
</svg>
<span class="t" style="left:547px;top:9px">Default</span>

<div class="btn dark" style="left:624px;top:7px;width:99px;height:19px;border-radius:4px"></div>
<div class="btn" style="left:656px;top:7px;width:67px;height:19px;border-radius:0 4px 4px 0;background:#363636"></div>
<svg class="ic" style="left:624px;top:7px" width="34" height="19" viewBox="0 0 34 19">
<g fill="none" stroke="#cfcfcf" stroke-width="1.1"><path d="M5 6 V3 H8 M14 3 H17 V6 M17 12 V15 H14 M8 15 H5 V12"/></g>
<rect x="7.3" y="5.3" width="7.4" height="7.4" fill="#e0e0e0"/>
<path d="M21.5 8.2 L24.5 11.2 L27.5 8.2" stroke="#bbb" stroke-width="1.1" fill="none"/>
</svg>
<span class="t" style="left:669px;top:9px">Object</span>

<div class="btn blue" style="left:741px;top:7px;width:20px;height:19px;border-radius:4px 0 0 4px"></div>
<div class="btn dark" style="left:760px;top:7px;width:123px;height:19px;border-radius:0"></div>
<div class="btn gray" style="left:883px;top:7px;width:21px;height:19px;border-radius:0 4px 4px 0"></div>
<svg class="ic" style="left:741px;top:7px" width="170" height="19" viewBox="0 0 170 19">
<path d="M5 3.5 L16 8 L11 9.8 L9.5 15 Z" fill="#f0f0f0"/>
<path d="M133 8.2 L136 11.2 L139 8.2" stroke="#bbb" stroke-width="1.1" fill="none"/>
<path d="M145 10 L148.5 15 L157 3" stroke="#cfcfcf" stroke-width="1.3" fill="none"/>
</svg>
<span class="t" style="left:768px;top:9px">Non-Destructive</span>

<div class="btn dark" style="left:922px;top:7px;width:33px;height:19px;border-radius:4px 0 0 4px"></div>
<div class="btn blue" style="left:954px;top:7px;width:20px;height:19px;border-radius:0 4px 4px 0"></div>
<svg class="ic" style="left:922px;top:7px" width="52" height="19" viewBox="0 0 52 19">
<g transform="translate(11.5 9.5)"><circle r="4.8" fill="#e0e0e0"/><g stroke="#e0e0e0" stroke-width="2.4"><path d="M0 -7 V7 M-7 0 H7 M-5 -5 L5 5 M-5 5 L5 -5"/></g><circle r="1.8" fill="#2b2b2b"/></g>
<path d="M21.5 8.2 L24.5 11.2 L27.5 8.2" stroke="#bbb" stroke-width="1.1" fill="none"/>
<rect x="38" y="4" width="2.2" height="11" fill="#f0f0f0"/><rect x="43" y="4" width="2.2" height="11" fill="#f0f0f0"/>
</svg>
<div class="a" style="left:982px;top:0;width:1px;height:33px;background:#373737"></div>
<div class="a" style="left:1671px;top:0;width:1px;height:33px;background:#373737"></div>
</div>
<div id="status" class="a">
<svg class="ic" style="left:0;top:0" width="900" height="21" viewBox="0 0 900 21">
<g fill="none" stroke="#bdbdbd" stroke-width="1.1"><rect x="12" y="3.5" width="11" height="16" rx="4"/><rect x="161" y="3.5" width="11" height="16" rx="4"/><path d="M174.5 2.5 V9 M177 1 V8"/><rect x="260.5" y="3.5" width="11" height="16" rx="4"/><rect x="497.5" y="3.5" width="11" height="16" rx="4"/></g>
<g fill="#bdbdbd"><path d="M12.5 8 V6 A3.5 3.5 0 0 1 16 3.5 H17.5 V10 H12.5Z"/><path d="M161.5 8 V6 A3.5 3.5 0 0 1 165 3.5 H166.5 V10 H161.5Z"/><rect x="265" y="6" width="2" height="5" rx="1"/><path d="M508 8 V6 A3.5 3.5 0 0 0 504.5 3.5 H503 V10 H508Z"/></g>
</svg>
<span class="t" style="left:34px;top:4px;color:#c4c4c4">Select or Deselect All</span>
<span class="t" style="left:185px;top:4px;color:#c4c4c4">Box Cutter</span>
<span class="t" style="left:283px;top:4px;color:#c4c4c4">Rotate View</span>
<span class="t" style="left:519px;top:4px;color:#c4c4c4">Call Menu</span>
<div class="a" style="left:782px;top:2px;width:100px;height:17px;background:#262626;border:1px solid #383838;border-radius:4px"></div>
<div class="a" style="left:806px;top:3px;width:1px;height:15px;background:#3a3a3a"></div>
<svg class="ic" style="left:782px;top:2px" width="24" height="19" viewBox="0 0 24 19">
<path d="M5 3 H18 A1.5 1.5 0 0 1 19.5 4.5 V13 A1.5 1.5 0 0 1 18 14.5 H12 L10 17.5 L9 14.5 H5 A1.5 1.5 0 0 1 3.5 13 V4.5 A1.5 1.5 0 0 1 5 3Z" fill="#b8b8b8"/>
<rect x="10.5" y="7.5" width="2" height="5.5" fill="#2a2a2a"/><circle cx="11.5" cy="5.5" r="1.1" fill="#2a2a2a"/><path d="M9.5 7.5 H12.5 M9.5 13 H13.5" stroke="#2a2a2a" stroke-width="1"/>
</svg>
<span class="t" style="left:815px;top:4px;color:#d0d0d0">Cancelled</span>
<span class="t" style="left:1212px;top:4px;color:#c4c4c4">Collection | Cube | Verts:8 | Faces:6 | Tris:12 | Objects:1/1 | Mem: 94.8 MB | v2.80.44</span>
</div>
</body></html>
